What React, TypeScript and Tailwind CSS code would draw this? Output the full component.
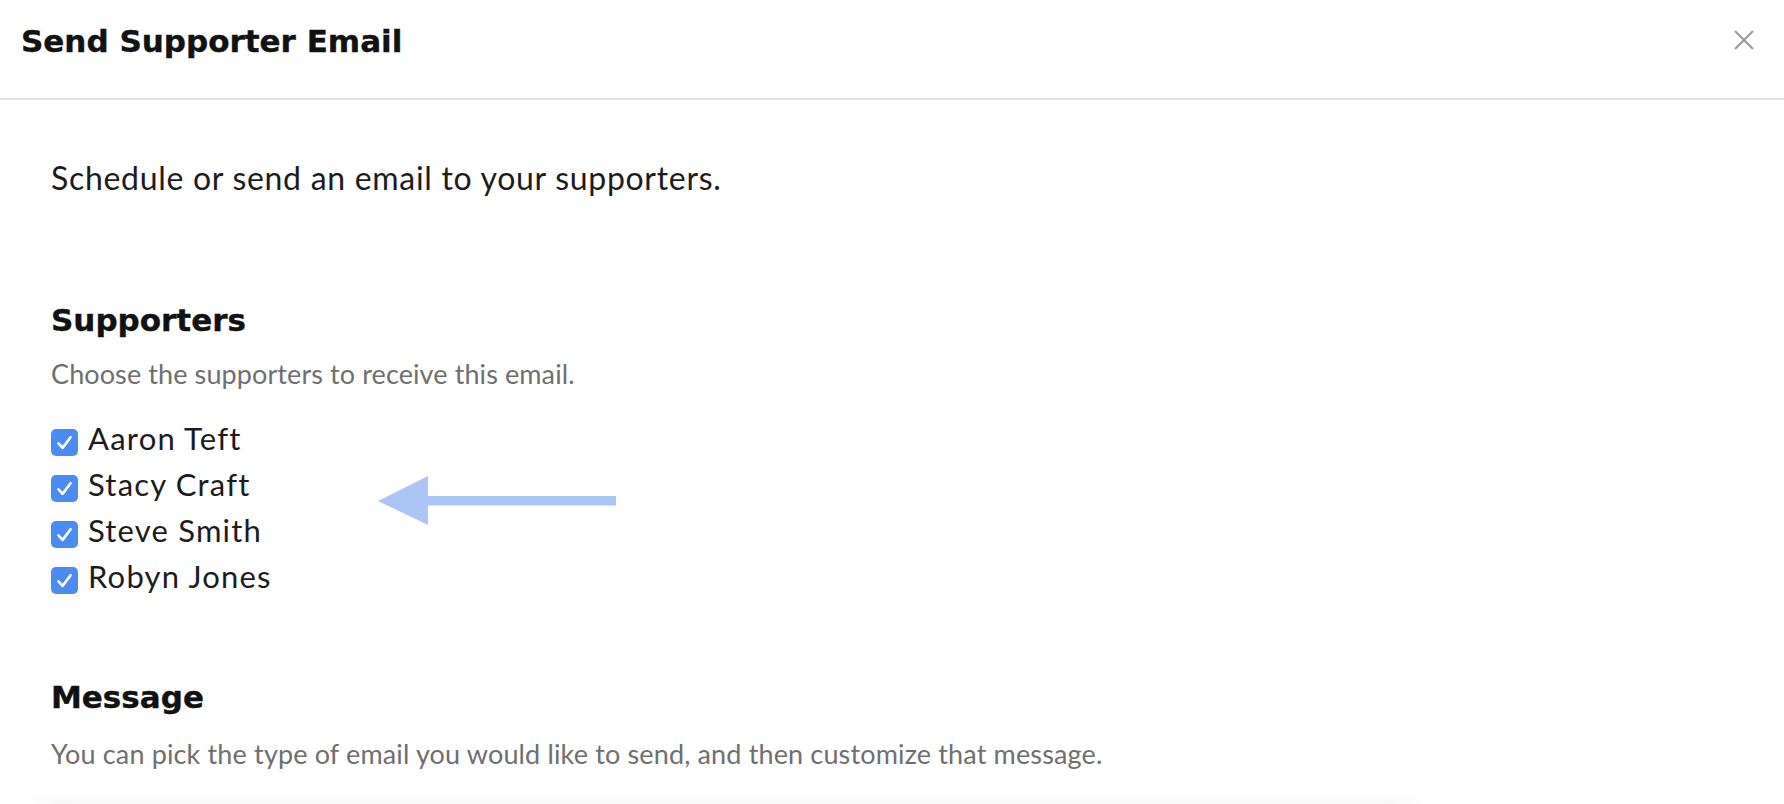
import React from "react";

const names = ["Aaron Teft", "Stacy Craft", "Steve Smith", "Robyn Jones"];

function Check() {
  return (
    <span className="mt-[14px] flex h-[27px] w-[27px] shrink-0 items-center justify-center rounded-[5px] bg-[#4b8cf3]">
      <svg width="27" height="27" viewBox="0 0 27 27" fill="none">
        <path d="M7.5 14.4 L11.6 18.9 L19.6 8.2" stroke="white" strokeWidth="2.6" strokeLinecap="round" strokeLinejoin="round" />
      </svg>
    </span>
  );
}

export default function App() {
  return (
    <div className="h-[804px] w-[1784px] overflow-hidden bg-white font-['Lato',sans-serif] text-[#1c1c1c]">
      <header className="flex h-[100px] items-start justify-between border-b-2 border-[#e4e4e4] pl-[21px] pr-[30px] pt-[19px]">
        <h1 className="font-['DejaVu_Sans',sans-serif] text-[31px] font-bold leading-[44px] text-[#121212] [-webkit-text-stroke:0.4px_#121212]">
          Send Supporter Email
        </h1>
        <button className="mt-[11px] flex h-[20px] w-[20px] items-center justify-center" aria-label="Close">
          <svg width="20" height="20" viewBox="0 0 20 20" fill="none">
            <path d="M1 1 L19 19 M19 1 L1 19" stroke="#9b9b9b" strokeWidth="2.2" />
          </svg>
        </button>
      </header>

      <main className="flex flex-col pl-[51px] pt-[58px]">
        <p className="text-[32px] leading-[40px] tracking-[0.7px]">Schedule or send an email to your supporters.</p>

        <h2 className="mt-[104px] font-['DejaVu_Sans',sans-serif] text-[31px] font-bold leading-[36px] text-[#121212] [-webkit-text-stroke:0.4px_#121212]">
          Supporters
        </h2>
        <p className="mt-[19px] text-[27px] leading-[34px] tracking-[0.1px] text-[#6f6f6f]">
          Choose the supporters to receive this email.
        </p>

        <div className="relative mt-[24px] flex flex-col">
          {names.map((n) => (
            <label key={n} className="flex items-start gap-[10px]">
              <Check />
              <span className="text-[31px] leading-[46px] tracking-[1.2px]">{n}</span>
            </label>
          ))}
          <svg className="absolute left-[327px] top-[61px]" width="238" height="50" viewBox="0 0 238 50">
            <polygon points="0,25 50,0 50,49" fill="#abc5f7" />
            <rect x="49" y="20" width="189" height="9.5" fill="#abc5f7" />
          </svg>
        </div>

        <h2 className="mt-[80px] font-['DejaVu_Sans',sans-serif] text-[31px] font-bold leading-[36px] text-[#121212] [-webkit-text-stroke:0.4px_#121212]">
          Message
        </h2>
        <p className="mt-[22px] text-[27px] leading-[34px] tracking-[0.15px] text-[#6f6f6f]">
          You can pick the type of email you would like to send, and then customize that message.
        </p>

        <div className="ml-[-12px] mt-[38px] h-[200px] w-[1372px] rounded-[14px] bg-white shadow-[0_0_26px_rgba(0,0,0,0.09)]" />
      </main>
    </div>
  );
}
